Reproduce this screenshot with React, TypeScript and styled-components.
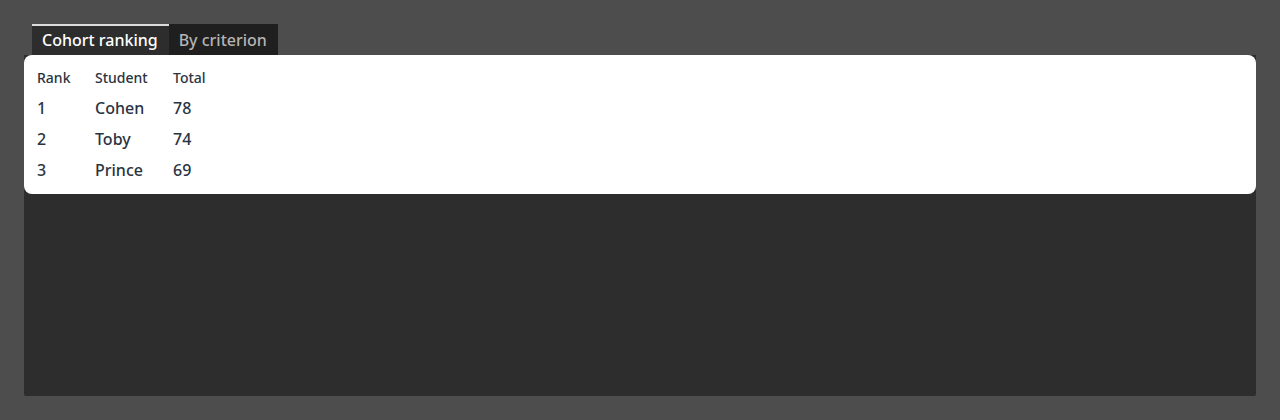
import React, { useState } from "react";
import styled, { createGlobalStyle } from "styled-components";

const Global = createGlobalStyle`
  html, body { margin: 0; padding: 0; background: #4d4d4d; }
  body { font-family: "Noto Sans", "Open Sans", "Liberation Sans", sans-serif; }
`;

const Page = styled.div`
  padding: 24px 24px 0 24px;
  height: 420px;
  box-sizing: border-box;
`;

const TabBar = styled.div`
  display: flex;
  padding-left: 8px;
  height: 31px;
`;

const Tab = styled.button<{ $active: boolean }>`
  font-family: inherit;
  font-size: 16px;
  font-weight: 500;
  border: none;
  border-top: 2px solid ${(p) => (p.$active ? "#dcdcdc" : "transparent")};
  background: ${(p) => (p.$active ? "#2d2d2d" : "#1f1f1f")};
  color: ${(p) => (p.$active ? "#ffffff" : "#b4b4b4")};
  padding: 0 11px 0 10px;
  height: 31px;
  line-height: 27px;
  cursor: pointer;
`;

const Panel = styled.div`
  background: #2d2d2d;
  height: 341px;
  border-radius: 0 0 2px 2px;
`;

const Card = styled.div`
  background: #ffffff;
  border-radius: 8px;
  padding: 6px 1px 9px 1px;
`;

const Table = styled.table`
  border-collapse: collapse;
`;

const Col = styled.col<{ $w?: number }>`
  width: ${(p) => (p.$w ? `${p.$w}px` : "auto")};
`;

const Th = styled.th`
  text-align: left;
  font-size: 14px;
  font-weight: 500;
  padding: 2px 12px 0 12px;
  height: 31px;
  box-sizing: border-box;
  color: #2a3342;
`;

const Td = styled.td`
  font-size: 16px;
  font-weight: 500;
  padding: 0 12px;
  height: 31px;
  color: #2a3342;
`;

const rows = [
  { rank: 1, name: "Cohen", total: 78 },
  { rank: 2, name: "Toby", total: 74 },
  { rank: 3, name: "Prince", total: 69 },
];

export default function App() {
  const [tab, setTab] = useState(0);
  return (
    <Page>
      <Global />
      <TabBar>
        <Tab $active={tab === 0} onClick={() => setTab(0)}>Cohort ranking</Tab>
        <Tab $active={tab === 1} onClick={() => setTab(1)}>By criterion</Tab>
      </TabBar>
      <Panel>
        <Card>
          <Table>
            <colgroup>
              <Col $w={58} />
              <Col $w={78} />
              <Col />
            </colgroup>
            <thead>
              <tr>
                <Th>Rank</Th>
                <Th>Student</Th>
                <Th>Total</Th>
              </tr>
            </thead>
            <tbody>
              {rows.map((r) => (
                <tr key={r.rank}>
                  <Td>{r.rank}</Td>
                  <Td>{r.name}</Td>
                  <Td>{r.total}</Td>
                </tr>
              ))}
            </tbody>
          </Table>
        </Card>
      </Panel>
    </Page>
  );
}
